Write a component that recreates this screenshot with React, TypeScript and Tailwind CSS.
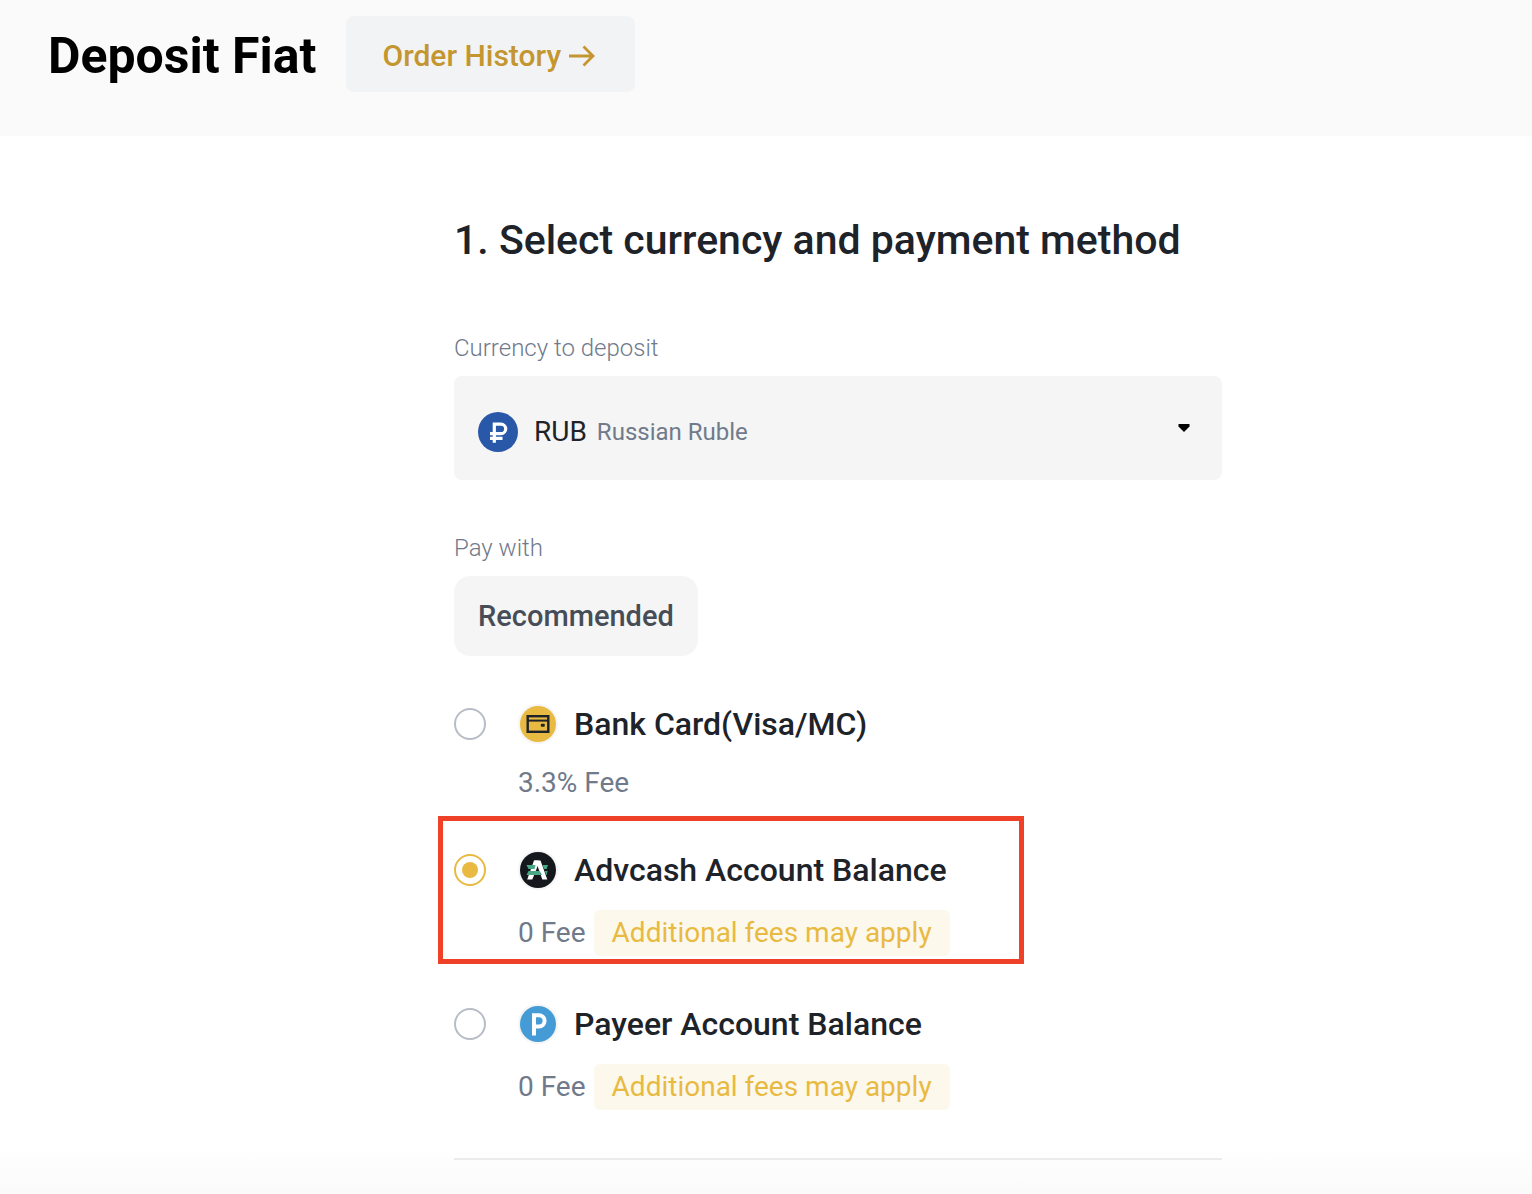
import React, { useState } from 'react';

const CardIcon = () => (
  <svg viewBox="0 0 40 40" className="size-10 shrink-0" aria-hidden="true">
    <circle cx="20" cy="20" r="20" fill="#f5f5f5" />
    <circle cx="20" cy="20" r="18" fill="#e8ba42" />
    <rect x="9.7" y="12.2" width="20.6" height="15.6" fill="none" stroke="#1e2329" strokeWidth="2.4" />
    <path d="M10 16.6h20" stroke="#1e2329" strokeWidth="2" />
    <rect x="22.8" y="19.8" width="4" height="3" rx="1" fill="#1e2329" />
  </svg>
);

const AdvcashIcon = () => (
  <svg viewBox="0 0 40 40" className="size-10 shrink-0" aria-hidden="true">
    <circle cx="20" cy="20" r="20" fill="#f5f5f5" />
    <circle cx="20" cy="20" r="18" fill="#14171b" />
    <path d="M16 10.5H20.5V14L14.3 29.5H9.2Z" fill="#fff" />
    <path d="M16 10.5H22.5L29.3 29.5H24.3L18.5 13Z" fill="#fff" />
    <path d="M8.5 15H17.5L16.5 19H10.5ZM24.5 15H30L28.6 19H26Z" fill="#49a985" />
    <path d="M10.5 21H21.8L24 25H8.5ZM26.8 21H29.6L28.6 25H28.2Z" fill="#49a985" />
  </svg>
);

const PayeerIcon = () => (
  <svg viewBox="0 0 40 40" className="size-10 shrink-0" aria-hidden="true">
    <circle cx="20" cy="20" r="20" fill="#f5f5f5" />
    <circle cx="20" cy="20" r="18" fill="#459bd6" />
    <path d="M16 31.5V11.2H21a5.4 5.4 0 0 1 0 11.2H16" fill="none" stroke="#fff" strokeWidth="4" />
  </svg>
);

const RubleIcon = () => (
  <svg viewBox="0 0 40 40" className="size-10 shrink-0" aria-hidden="true">
    <circle cx="20" cy="20" r="20" fill="#2a58a9" />
    <path d="M16.3 30.7V12.2H23a4.4 4.4 0 0 1 0 9.4H12M12 26.3H24.5" fill="none" stroke="#fff" strokeWidth="3.2" />
  </svg>
);

const methods = [
  { id: 'card', name: 'Bank Card(Visa/MC)', fee: '3.3% Fee', extra: false, icon: <CardIcon /> },
  { id: 'advcash', name: 'Advcash Account Balance', fee: '0 Fee', extra: true, icon: <AdvcashIcon /> },
  { id: 'payeer', name: 'Payeer Account Balance', fee: '0 Fee', extra: true, icon: <PayeerIcon /> },
];

const App = () => {
  const [currency, setCurrency] = useState('RUB');
  const [method, setMethod] = useState('advcash');

  return (
    <div className="min-h-screen flex flex-col bg-white font-['Roboto','Liberation_Sans',sans-serif] text-[#1e2329]">
      <header className="flex items-start gap-[30px] bg-[#fafafa] px-12 pt-4 pb-10">
        <h1 className="text-[50px] leading-[80px] font-bold text-black">Deposit Fiat</h1>
        <a href="#history" className="flex items-center gap-2 h-[76px] px-9 pt-1 rounded-lg bg-[#f2f3f5] text-[30px] leading-10 font-medium text-[#c4962f]">
          Order History
          <svg viewBox="0 0 26 24" className="w-[26px] h-6 mr-1" fill="none" stroke="currentColor" strokeWidth="2.8" aria-hidden="true">
            <path d="M0 12H24M14.5 2.5L24 12L14.5 21.5" />
          </svg>
        </a>
      </header>

      <main className="grow bg-linear-to-t from-[#fafafa] to-white to-[48px]">
        <div className="max-w-[912px] mx-auto pl-36 pt-20">
          <h2 className="text-[41px] leading-[48px] font-medium">1. Select currency and payment method</h2>

          <label htmlFor="currency" className="block mt-16 text-[24px] leading-10 font-light text-[#707a8a]">Currency to deposit</label>
          <div className="relative flex items-center h-[104px] mt-2 px-6 pt-2 rounded-lg bg-[#f5f5f5]">
            <RubleIcon />
            <span className="ml-4 text-[28px] leading-10">{currency}</span>
            <span className="ml-2.5 text-[24px] leading-10 text-[#707a8a]">Russian Ruble</span>
            <svg viewBox="0 0 12 8" className="w-3 h-2 ml-auto mr-2 mb-2" aria-hidden="true">
              <path d="M0.5 0H11.5V2.5L6 8L0.5 2.5Z" fill="#000" />
            </svg>
            <select
              id="currency"
              value={currency}
              onChange={e => setCurrency(e.target.value)}
              className="absolute inset-0 w-full h-full opacity-0 cursor-pointer"
            >
              <option value="RUB">RUB</option>
            </select>
          </div>

          <p className="mt-12 text-[24px] leading-10 font-light text-[#707a8a]">Pay with</p>
          <button type="button" className="h-20 mt-2 px-6 rounded-2xl bg-[#f5f5f5] text-[29px] leading-10 font-medium text-[#474d57]">
            Recommended
          </button>

          <div className="flex flex-col gap-11 mt-11 pb-12 border-b-2 border-[#ebebeb]">
            {methods.map(m => (
              <div key={m.id} className="relative">
                <div className="flex items-center h-12">
                  <input
                    type="radio"
                    id={m.id}
                    name="method"
                    checked={method === m.id}
                    onChange={() => setMethod(m.id)}
                    className="appearance-none grid place-content-center size-8 mr-8 shrink-0 rounded-full border-2 border-[#b7bdc6] checked:border-[#e8ba42] checked:before:block checked:before:size-4 checked:before:rounded-full checked:before:bg-[#e8ba42]"
                  />
                  <label htmlFor={m.id} className="flex items-center gap-4 text-[32px] leading-[48px] font-medium">
                    {m.icon}
                    {m.name}
                  </label>
                </div>
                <div className="flex items-center gap-2 mt-4 pl-16 text-[28px] leading-[38px] text-[#707a8a]">
                  <span>{m.fee}</span>
                  {m.extra && (
                    <span className="px-[18px] py-1 rounded-md bg-[#fcf8eb] text-[#e8ba42]">Additional fees may apply</span>
                  )}
                </div>
                {/* Highlight frame */}
                {method === m.id && (
                  <div className="absolute -left-4 -top-[30px] -bottom-2 w-[586px] border-5 border-[#ee4127] pointer-events-none" />
                )}
              </div>
            ))}
          </div>
        </div>
      </main>
    </div>
  );
};

export default App;
